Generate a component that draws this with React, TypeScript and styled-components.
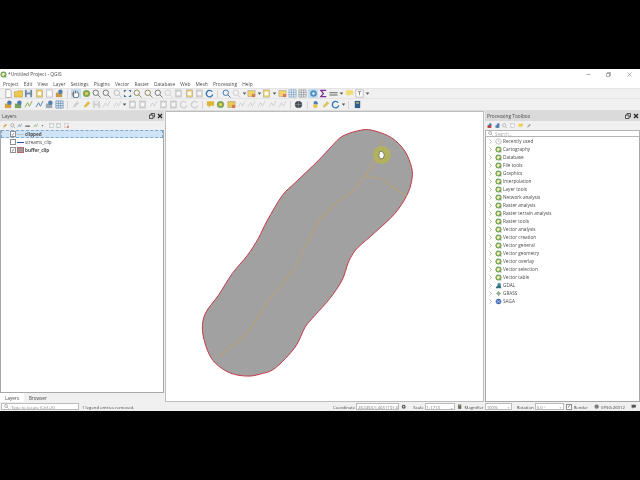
import { createGlobalStyle, styled } from 'styled-components';

const GlobalStyle = createGlobalStyle`
  html, body { margin: 0; padding: 0; background: #000; }
  body { font-family: "Open Sans", "Liberation Sans", sans-serif; font-size: 5px; color: #4a4a4a; }
`;

const Page = styled.div`
  width: 640px;
  height: 480px;
  display: flex;
  flex-direction: column;
  overflow: hidden;
`;

const Letterbox = styled.div`
  height: 69px;
  flex: none;
  background: #000;
`;

const Win = styled.div`
  height: 342px;
  flex: none;
  display: flex;
  flex-direction: column;
  background: #f0f0f0;
  filter: blur(0.3px);
`;

const TitleBar = styled.div`
  height: 10px;
  flex: none;
  display: flex;
  align-items: center;
  gap: 1px;
  padding: 0 1px 0 0;
  background: #fff;
  font-size: 4.9px;
`;

const TitleText = styled.span`
  flex: 1;
`;

const WinButton = styled.span`
  width: 19.500px;
  display: flex;
  justify-content: center;
`;

const MenuBar = styled.div`
  height: 9px;
  flex: none;
  display: flex;
  align-items: center;
  gap: 5.2px;
  padding-left: 3px;
  background: #fff;
  font-size: 4.8px;
`;

const ToolRow = styled.div<{ $h: number }>`
  height: ${p => p.$h}px;
  flex: none;
  display: flex;
  align-items: center;
  padding-left: 3px;
  background: #f0f0f0;
  border-top: 1px solid #e4e4e4;
  box-sizing: border-box;
`;

const Slot = styled.span<{ $on?: boolean; $w?: number }>`
  width: ${p => p.$w ?? 10.3}px;
  height: 9px;
  flex: none;
  display: flex;
  align-items: center;
  justify-content: center;
  background: ${p => (p.$on ? '#c3dcf0' : 'transparent')};
`;

const Sep = styled.span`
  width: 1px;
  height: 8px;
  flex: none;
  margin: 0 2.5px;
  background: #d6d6d6;
`;

const Main = styled.div`
  flex: 1;
  min-height: 0;
  display: flex;
  gap: 1px;
  border-top: 1px solid #dcdcdc;
`;

const Dock = styled.div<{ $w: number }>`
  width: ${p => p.$w}px;
  flex: none;
  display: flex;
  flex-direction: column;
`;

const DockHead = styled.div`
  height: 10px;
  flex: none;
  display: flex;
  align-items: center;
  justify-content: space-between;
  padding: 0 1px 0 2px;
  background: #dadada;
  font-size: 4.8px;
`;

const DockButtons = styled.span`
  display: flex;
  align-items: center;
  gap: 2px;
`;

const DockTools = styled.div`
  height: 9px;
  flex: none;
  display: flex;
  align-items: center;
  padding-left: 1px;
`;

const MiniSlot = styled.span`
  width: 7.8px;
  flex: none;
  display: flex;
  justify-content: center;
`;

const TreePane = styled.div`
  flex: 1;
  min-height: 0;
  background: #fff;
  border: 1px solid #a8a8a8;
  border-top: none;
`;

const LayerRow = styled.div<{ $sel?: boolean }>`
  height: 8px;
  display: flex;
  align-items: center;
  padding-left: 8.500px;
  box-sizing: border-box;
  font-size: 4.6px;
  background: ${p => (p.$sel ? '#cfe4f6' : 'transparent')};
  outline: ${p => (p.$sel ? '1px dashed #7fa9cc' : 'none')};
  outline-offset: -1px;
`;

const Check = styled.span`
  width: 6px;
  height: 6px;
  flex: none;
  box-sizing: border-box;
  border: 1px solid #8f8f8f;
  background: #fff;
  display: flex;
  align-items: center;
  justify-content: center;
  font-size: 4.5px;
  line-height: 1;
  color: #555;
`;

const LayerName = styled.span<{ $bold?: boolean }>`
  margin-left: 1px;
  font-weight: ${p => (p.$bold ? 700 : 400)};
`;

const Swatch = styled.span<{ $kind: 'line' | 'blue' | 'fill' }>`
  width: 7px;
  height: ${p => (p.$kind === 'fill' ? 6 : 1)}px;
  flex: none;
  margin-left: 1.500px;
  box-sizing: border-box;
  background: ${p => (p.$kind === 'line' ? '#b9c4cc' : p.$kind === 'blue' ? '#2f4ea0' : '#a09a9a')};
  border: ${p => (p.$kind === 'fill' ? '1px solid #b06a70' : 'none')};
`;

const Tabs = styled.div`
  height: 9px;
  flex: none;
  display: flex;
  font-size: 4.6px;
`;

const Tab = styled.span<{ $on?: boolean }>`
  padding: 0 5px 0 5px;
  display: flex;
  align-items: center;
  background: ${p => (p.$on ? '#fff' : 'transparent')};
`;

const Canvas = styled.div`
  width: 319px;
  flex: none;
  background: #fff;
  border: 1px solid #bdbdbd;
  box-sizing: border-box;
`;

const MapSvg = styled.svg`
  display: block;
  width: 100%;
  height: 100%;
`;

const SearchBox = styled.div`
  height: 7px;
  flex: none;
  display: flex;
  align-items: center;
  gap: 2px;
  padding-left: 2px;
  box-sizing: border-box;
  background: #fff;
  border: 1px solid #b4b4b4;
  color: #aaa;
  font-size: 4.4px;
`;

const ToolboxRow = styled.div`
  height: 8px;
  display: flex;
  align-items: center;
  padding-left: 3px;
  font-size: 4.7px;
`;

const Chevron = styled.span`
  width: 6px;
  flex: none;
  display: flex;
`;

const RowLabel = styled.span`
  margin-left: 1px;
`;

const StatusBar = styled.div`
  height: 9px;
  flex: none;
  display: flex;
  align-items: center;
  font-size: 4.3px;
  padding: 0 3px 0 1px;
`;

const Locator = styled.div`
  width: 78px;
  height: 7px;
  flex: none;
  display: flex;
  align-items: center;
  gap: 2px;
  padding-left: 2px;
  box-sizing: border-box;
  background: #fff;
  border: 1px solid #bcbcbc;
  color: #888;
`;

const Message = styled.span`
  margin-left: 3px;
  flex: 1;
`;

const Field = styled.span<{ $w: number }>`
  width: ${p => p.$w}px;
  height: 7px;
  flex: none;
  box-sizing: border-box;
  display: flex;
  align-items: center;
  justify-content: space-between;
  padding: 0 1px;
  background: #fff;
  border: 1px solid #bcbcbc;
  color: #777;
  margin: 0 2px 0 1px;
`;

const StatusLabel = styled.span<{ $gap?: number }>`
  display: flex;
  margin-left: ${p => p.$gap ?? 0}px;
`;

type Kind =
  | 'doc' | 'folder' | 'disk' | 'sheet' | 'glass' | 'hand' | 'diamond' | 'arrows'
  | 'refresh' | 'box' | 'grid' | 'gear' | 'sigma' | 'ruler' | 'bubble' | 'text'
  | 'pencil' | 'globe' | 'snake' | 'book' | 'layer' | 'line' | 'caret';

// every toolbar button is one little 10x10 drawing
const Icon = ({ kind, c = '#888', o = 1 }: { kind: Kind; c?: string; o?: number }) => {
  let body = null;
  if (kind === 'doc') body = <path d="M2 .5h4l2 2v7H2z" fill="#fff" stroke="#999" strokeWidth=".8" />;
  if (kind === 'folder') body = <path d="M.5 3h3l1-1h5v7H.5z" fill={c} stroke="#a9892c" strokeWidth=".5" />;
  if (kind === 'disk') body = <g><rect x="1" y="1" width="8" height="8" fill={c} /><rect x="3" y="1" width="4" height="3" fill="#dfe6ee" /><rect x="3" y="6" width="4" height="3" fill="#eee" /></g>;
  if (kind === 'sheet') body = <g><rect x="1.5" y="1" width="7" height="8" fill={c} stroke="#999" strokeWidth=".5" /><rect x="3" y="3" width="4" height="4" fill="#fff" /></g>;
  if (kind === 'glass') body = <g fill="none" stroke={c} strokeWidth="1.1"><circle cx="4.2" cy="4.2" r="3" fill="#f4f4f4" /><path d="M6.5 6.5l3 3" /></g>;
  if (kind === 'hand') body = <path d="M3 9V4M3 5V2.5M5 5V1.5M7 5V2.5M3 5C2 4 1 4.500 1.500 5.500L3.500 9.500H7.500L8.500 7V4" fill="#fff" stroke="#555" strokeWidth=".8" />;
  if (kind === 'diamond') body = <g><circle cx="5" cy="5" r="4" fill="#7fa65a" /><circle cx="5" cy="5" r="1.800" fill="#f0d04a" /></g>;
  if (kind === 'arrows') body = <path d="M1 1h3L1 4zM9 1v3L6 1zM1 9V6l3 3zM9 9H6l3-3z" fill={c} />;
  if (kind === 'refresh') body = <path d="M8 3A3.600 3.600 0 1 0 8.600 6" fill="none" stroke={c} strokeWidth="1.500" />;
  if (kind === 'box') body = <g><rect x="1" y="1.500" width="8" height="7" fill={c} stroke="#999" strokeWidth=".5" /><rect x="5.500" y="5.500" width="3.500" height="3.500" fill="#d9534f" opacity=".7" /></g>;
  if (kind === 'grid') body = <path d="M1 1h8v8H1zM1 3.700h8M1 6.300h8M3.700 1v8M6.300 1v8" fill="#eef2f5" stroke={c} strokeWidth=".7" />;
  if (kind === 'gear') body = <g><circle cx="5" cy="5" r="3.600" fill={c} /><circle cx="5" cy="5" r="1.300" fill="#fff" /></g>;
  if (kind === 'sigma') body = <path d="M8 1.500H2L5 5 2 8.500h6" fill="none" stroke={c} strokeWidth="1.300" />;
  if (kind === 'ruler') body = <path d="M.5 3.500h9v1.200h-9zM.5 6h9v1.200h-9z" fill={c} />;
  if (kind === 'bubble') body = <path d="M1 1.500h8v5H5L3 9V6.500H1z" fill={c} />;
  if (kind === 'text') body = <g><rect x="1" y="1" width="8" height="8" fill="#fff" stroke="#999" strokeWidth=".6" /><path d="M3 3h4M5 3v4" stroke="#777" strokeWidth=".9" /></g>;
  if (kind === 'pencil') body = <path d="M2 8.500l1-3 4-4 2 2-4 4z" fill={c} />;
  if (kind === 'globe') body = <g><circle cx="5" cy="5" r="4" fill={c} /><path d="M1 5h8M5 1v8" stroke="#99a" strokeWidth=".6" /></g>;
  if (kind === 'snake') body = <g><path d="M5 1C3 1 3 2 3 5h4C8 5 8 1 5 1z" fill="#4b7fb5" /><path d="M5 9C7 9 7 8 7 5H3C2 5 2 9 5 9z" fill="#e8c63e" /></g>;
  if (kind === 'book') body = <g><rect x="2" y="1" width="6" height="8" fill={c} /><rect x="3.500" y="2.500" width="3" height="1.500" fill="#d9c35c" /></g>;
  if (kind === 'layer') body = <g><rect x="1" y="4" width="7" height="5" fill={c} /><circle cx="6" cy="3" r="2.500" fill="#4f7fb0" /></g>;
  if (kind === 'line') body = <path d="M1 8l3-5 2 4 3-6" fill="none" stroke={c} strokeWidth="1" />;
  if (kind === 'caret') body = <path d="M3 4h4L5 6.500z" fill="#555" />;
  return (
    <svg width={kind === 'caret' ? 5 : 9} height="9" viewBox={kind === 'caret' ? '2.500 0 5 10' : '0 0 10 10'} opacity={o}>
      {body}
    </svg>
  );
};

type Spec = { k: Kind; c?: string; o?: number; on?: boolean; w?: number } | 'sep';

const fade = (k: Kind): Spec => ({ k, c: '#b5b5b5', o: 0.55 });
const caret: Spec = { k: 'caret', w: 5 };

const ROW_ONE: Spec[] = [
  { k: 'doc' }, { k: 'folder', c: '#edc94f' }, { k: 'disk', c: '#6f8aa6' }, { k: 'sheet', c: '#eccb55' },
  { k: 'sheet', c: '#eef2f5' }, { k: 'layer', c: '#c49a4a' }, 'sep',
  { k: 'hand', on: true }, { k: 'diamond' }, { k: 'glass', c: '#777' }, { k: 'glass', c: '#777' },
  { k: 'glass', c: '#999', o: 0.6 }, { k: 'arrows', c: '#3f6c9c' }, { k: 'glass', c: '#8d8d5a' },
  { k: 'glass', c: '#8d8d5a' }, { k: 'glass', c: '#777' }, fade('glass'), fade('sheet'), { k: 'sheet', c: '#e6cf74' },
  fade('sheet'), { k: 'refresh', c: '#2f76b4' }, 'sep',
  { k: 'glass', c: '#3f78ad' }, fade('glass'), caret, { k: 'box', c: '#eed267' }, caret, { k: 'sheet', c: '#eed267' }, caret,
  { k: 'box', c: '#f2d56a' }, { k: 'grid', c: '#6f9cc4' }, { k: 'grid', c: '#8a8a8a' }, { k: 'gear', c: '#4f8fc6', on: true },
  { k: 'sigma', c: '#7b2d8e' }, { k: 'ruler', c: '#666' }, caret, { k: 'bubble', c: '#f0dc70' }, { k: 'text' }, caret,
];

const ROW_TWO: Spec[] = [
  { k: 'layer', c: '#d9a03c' }, { k: 'layer', c: '#79a25c' }, { k: 'line', c: '#8aa84c' }, { k: 'line', c: '#4f7fb0' },
  { k: 'layer', c: '#9aa6b0' }, { k: 'grid', c: '#4f7fb0' }, 'sep',
  fade('pencil'), { k: 'pencil', c: '#e2b93c' }, fade('disk'), fade('line'), fade('line'), caret, fade('sheet'), fade('sheet'),
  fade('line'), fade('sheet'), fade('sheet'), fade('refresh'), fade('refresh'), 'sep',
  { k: 'bubble', c: '#dcb63a' }, { k: 'diamond' }, { k: 'box', c: '#e8c94f' }, fade('line'), fade('line'), fade('line'), fade('line'), fade('line'), 'sep',
  { k: 'globe', c: '#454a55' }, 'sep',
  { k: 'snake' }, { k: 'pencil', c: '#d9c35c' }, { k: 'refresh', c: '#2f76b4' }, caret, 'sep', { k: 'book', c: '#2f5f8f' },
];

const LAYER_TOOLS: [Kind, string][] = [
  ['pencil', '#d9a03c'], ['glass', '#888'], ['line', '#5b7f9f'], ['ruler', '#666'], ['line', '#7f9f5b'],
  ['caret', '#555'], ['sheet', '#ddd'], ['sheet', '#cdd'], ['box', '#eee'],
];

const BOX_TOOLS: [Kind, string][] = [
  ['layer', '#b33'], ['layer', '#4f7fb0'], ['glass', '#999'], ['sheet', '#e8e8e8'], ['bubble', '#f0cf4a'], ['pencil', '#aaa'],
];

const MENU = ['Project', 'Edit', 'View', 'Layer', 'Settings', 'Plugins', 'Vector', 'Raster', 'Database', 'Web', 'Mesh', 'Processing', 'Help'];

const PROVIDERS = [
  'Cartography', 'Database', 'File tools', 'Graphics', 'Interpolation', 'Layer tools', 'Network analysis', 'Raster analysis',
  'Raster terrain analysis', 'Raster tools', 'Vector analysis', 'Vector creation', 'Vector general', 'Vector geometry',
  'Vector overlay', 'Vector selection', 'Vector table',
];

const QgisMark = () => (
  <svg width="7" height="7" viewBox="0 0 10 10">
    <circle cx="5" cy="5" r="3.500" fill="#eee7b0" stroke="#6fa356" strokeWidth="1.700" />
    <path d="M6 6l3 3" stroke="#6fa356" strokeWidth="1.600" />
  </svg>
);

const ChevronMark = () => (
  <svg width="3" height="5" viewBox="0 0 3 5">
    <path d="M.5.500L2.500 2.500.5 4.500" fill="none" stroke="#999" strokeWidth=".7" />
  </svg>
);

const DockGlyphs = () => (
  <DockButtons>
    <svg width="6" height="6" viewBox="0 0 6 6"><path d="M.5 2h3.500v3.500H.5zM2 2V.5h3.500V4H4" fill="none" stroke="#333" strokeWidth=".8" /></svg>
    <svg width="6" height="6" viewBox="0 0 6 6"><path d="M1 1l4 4M5 1L1 5" stroke="#222" strokeWidth="1.200" /></svg>
  </DockButtons>
);

const MiniGlass = () => (
  <svg width="5" height="5" viewBox="0 0 5 5"><circle cx="2" cy="2" r="1.500" fill="none" stroke="#888" strokeWidth=".6" /><path d="M3 3l1.700 1.700" stroke="#888" strokeWidth=".6" /></svg>
);

const Toolbar = ({ items, h }: { items: Spec[]; h: number }) => (
  <ToolRow $h={h}>
    {items.map((it, i) =>
      it === 'sep' ? (
        <Sep key={i} />
      ) : (
        <Slot key={i} $on={it.on} $w={it.w}>
          <Icon kind={it.k} c={it.c} o={it.o} />
        </Slot>
      ),
    )}
  </ToolRow>
);

// closed catmull-rom curve through the traced points
const spline = (pts: number[][]) => {
  const at = (i: number) => pts[(i + pts.length) % pts.length];
  let d = `M${pts[0][0]} ${pts[0][1]}`;
  pts.forEach((p, i) => {
    const [a, b, c] = [at(i - 1), at(i + 1), at(i + 2)];
    d += `C${p[0] + (b[0] - a[0]) / 6} ${p[1] + (b[1] - a[1]) / 6} ${b[0] - (c[0] - p[0]) / 6} ${b[1] - (c[1] - p[1]) / 6} ${b[0]} ${b[1]}`;
  });
  return d + 'Z';
};

// traced from the reference, in page coordinates (the map svg's viewBox matches)
const OUTLINE = spline([
  [362, 129], [375, 130], [392, 137], [405, 150], [412, 167], [412, 180], [407, 195], [395, 213], [375, 232],
  [358, 247], [352, 255], [348, 263], [342, 280], [330, 298], [315, 315], [305, 327], [295, 347], [275, 368],
  [260, 374], [247, 376], [230, 373], [215, 363], [207, 350], [202, 330], [205, 313], [218, 295], [232, 273],
  [247, 255], [258, 238], [267, 220], [282, 195], [295, 182], [318, 160], [332, 145], [343, 135],
]);

const App = () => (
  <Page>
    <GlobalStyle />
    <Letterbox />
    <Win>
      <TitleBar>
        <QgisMark />
        <TitleText>*Untitled Project - QGIS</TitleText>
        <WinButton><svg width="5" height="5" viewBox="0 0 5 5"><path d="M.5 2.500h4" stroke="#777" strokeWidth=".6" /></svg></WinButton>
        <WinButton><svg width="5" height="5" viewBox="0 0 5 5"><path d="M.5 1.500h3v3h-3zM1.500 1.500V.5h3v3h-1" fill="none" stroke="#777" strokeWidth=".6" /></svg></WinButton>
        <WinButton><svg width="5" height="5" viewBox="0 0 5 5"><path d="M.5.500l4 4M4.500.500l-4 4" stroke="#777" strokeWidth=".6" /></svg></WinButton>
      </TitleBar>
      <MenuBar>
        {MENU.map(m => <span key={m}>{m}</span>)}
      </MenuBar>
      <Toolbar items={ROW_ONE} h={10} />
      <Toolbar items={ROW_TWO} h={12} />
      <Main>
        <Dock $w={164}>
          <DockHead>Layers<DockGlyphs /></DockHead>
          <DockTools>
            {LAYER_TOOLS.map(([k, c], i) => (
              <MiniSlot key={i}><svg width="6" height="6" viewBox="0 0 10 10"><Icon kind={k} c={c} /></svg></MiniSlot>
            ))}
          </DockTools>
          <TreePane>
            <LayerRow $sel><Check>✓</Check><Swatch $kind="line" /><LayerName $bold>clipped</LayerName></LayerRow>
            <LayerRow><Check /><Swatch $kind="blue" /><LayerName>streams_clip</LayerName></LayerRow>
            <LayerRow><Check>✓</Check><Swatch $kind="fill" /><LayerName $bold>buffer_clip</LayerName></LayerRow>
          </TreePane>
          <Tabs><Tab $on>Layers</Tab><Tab>Browser</Tab></Tabs>
        </Dock>
        <Canvas>
          <MapSvg viewBox="166 111 317 290">
            <path d={OUTLINE} fill="#a1a1a1" stroke="#c5384a" strokeWidth="1" />
            <path d="M383 138L377 152L372 165L365 175L353 190L335 203L320 218L312 233L303 250L295 267L283 283L268 300L258 317L245 335L217 358" fill="none" stroke="#b9a27c" strokeWidth="1.200" strokeLinejoin="round" />
            <path d="M365 175L382 178L395 188L407 195" fill="none" stroke="#b9a27c" strokeWidth="1.200" strokeLinejoin="round" />
            <circle cx="382" cy="154" r="9" fill="#b2b25e" />
            <path d="M380 150.500l3 .5 1.500 3-1 3.500-3 .5-1.500-3z" fill="#fff" stroke="#333" strokeWidth=".5" />
          </MapSvg>
        </Canvas>
        <Dock $w={155}>
          <DockHead>Processing Toolbox<DockGlyphs /></DockHead>
          <DockTools>
            {BOX_TOOLS.map(([k, c], i) => (
              <MiniSlot key={i}><svg width="6" height="6" viewBox="0 0 10 10"><Icon kind={k} c={c} /></svg></MiniSlot>
            ))}
          </DockTools>
          <SearchBox><MiniGlass />Search...</SearchBox>
          <TreePane>
            <ToolboxRow>
              <Chevron><ChevronMark /></Chevron>
              <svg width="7" height="7" viewBox="0 0 10 10"><circle cx="5" cy="5" r="3.800" fill="#fff" stroke="#aaa" /><path d="M5 2.500V5l2 1" fill="none" stroke="#aaa" strokeWidth=".8" /></svg>
              <RowLabel>Recently used</RowLabel>
            </ToolboxRow>
            {PROVIDERS.map(p => (
              <ToolboxRow key={p}>
                <Chevron><ChevronMark /></Chevron>
                <QgisMark />
                <RowLabel>{p}</RowLabel>
              </ToolboxRow>
            ))}
            <ToolboxRow>
              <Chevron><ChevronMark /></Chevron>
              <svg width="7" height="7" viewBox="0 0 10 10"><circle cx="6" cy="3.500" r="2.500" fill="#4d8f9f" /><path d="M1 9l2-4h5l1 4z" fill="#2f6f7f" /></svg>
              <RowLabel>GDAL</RowLabel>
            </ToolboxRow>
            <ToolboxRow>
              <Chevron><ChevronMark /></Chevron>
              <svg width="7" height="7" viewBox="0 0 10 10"><path d="M5 1l2 3 2 1-2 1-2 3-2-3-2-1 2-1z" fill="#8fa88f" /></svg>
              <RowLabel>GRASS</RowLabel>
            </ToolboxRow>
            <ToolboxRow>
              <Chevron><ChevronMark /></Chevron>
              <svg width="7" height="7" viewBox="0 0 10 10"><circle cx="5" cy="5" r="4" fill="#3f6fb5" /><path d="M2 3l6 4M2 7l6-4" stroke="#dde" strokeWidth=".8" /></svg>
              <RowLabel>SAGA</RowLabel>
            </ToolboxRow>
          </TreePane>
        </Dock>
      </Main>
      <StatusBar>
        <Locator><MiniGlass />Type to locate (Ctrl+K)</Locator>
        <Message>1 legend entries removed.</Message>
        <StatusLabel>Coordinate</StatusLabel>
        <Field $w={43}>452494.5,4651191.6</Field>
        <svg width="6" height="6" viewBox="0 0 10 10"><Icon kind="gear" c="#555" /></svg>
        <StatusLabel $gap={6}>Scale</StatusLabel>
        <Field $w={30}>1:1713<span>⌄</span></Field>
        <svg width="6" height="6" viewBox="0 0 10 10"><Icon kind="book" c="#666" /></svg>
        <StatusLabel $gap={2}>Magnifier</StatusLabel>
        <Field $w={27}>100%<span>÷</span></Field>
        <StatusLabel $gap={3}>Rotation</StatusLabel>
        <Field $w={29}>0.0 °<span>÷</span></Field>
        <Check>✓</Check>
        <StatusLabel $gap={2}>Render</StatusLabel>
        <StatusLabel $gap={6}>
          <svg width="6" height="6" viewBox="0 0 10 10"><Icon kind="globe" c="#777" /></svg>
        </StatusLabel>
        <StatusLabel $gap={1}>EPSG:26912</StatusLabel>
        <StatusLabel $gap={6}>
          <svg width="6" height="6" viewBox="0 0 10 10"><Icon kind="bubble" c="#555" /></svg>
        </StatusLabel>
      </StatusBar>
    </Win>
    <Letterbox />
  </Page>
);

export default App;
